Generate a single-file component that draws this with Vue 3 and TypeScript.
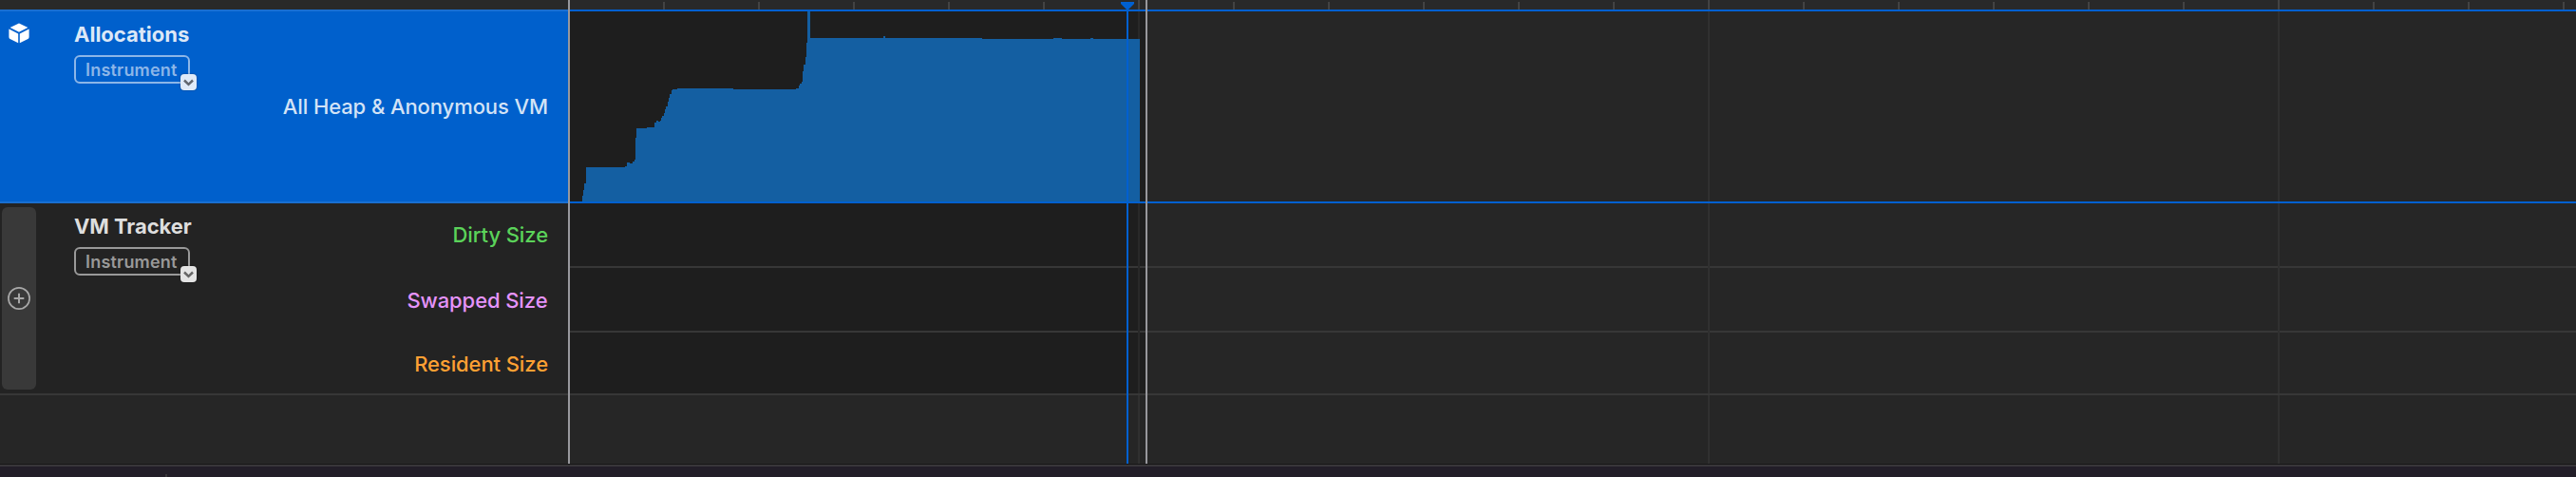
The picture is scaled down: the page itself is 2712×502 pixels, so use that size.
<script setup lang="ts">
interface Lane { name: string; tone: string }
const lanes: Lane[] = [
  { name: 'Dirty Size', tone: 'green' },
  { name: 'Swapped Size', tone: 'purple' },
  { name: 'Resident Size', tone: 'orange' },
]
const ticks: number[] = Array.from({ length: 21 }, (_, i) => 98 + i * 100).filter(x => (x + 2) % 600 !== 0)
const majors: number[] = [598, 1198, 1798]
// Step samples: [x, top] in lane pixels, each held until the next sample.
const steps: [number, number][] = [
  [13, 194], [14, 188], [15, 181], [17, 164], [58, 163], [60, 159], [63, 160], [66, 158], [68, 156],
  [69, 133], [70, 123], [81, 122], [89, 117], [91, 115], [93, 116], [95, 115], [96, 112], [97, 110],
  [99, 107], [100, 103], [101, 100], [103, 95], [104, 91], [105, 87], [107, 83], [108, 82], [113, 81],
  [172, 82], [238, 81], [241, 78], [242, 76], [244, 74], [245, 63], [246, 56], [248, 48], [249, 33],
  [250, 0], [253, 28], [330, 26], [332, 28], [434, 29], [509, 28], [518, 29], [548, 28], [551, 29],
]
const area: string = 'M13 200' + steps.map(([x, y]) => `H${x}V${y}`).join('') + 'H600V200Z'
</script>

<template>
  <div class="app">
    <div class="tracks">
      <aside class="sidebar">
        <div class="cap"></div>
        <section class="track selected">
          <div class="gutter">
            <svg class="cube" width="22" height="22" viewBox="0 0 22 22">
              <path d="M11 0.4 20.4 5 11 9.7 1.6 5Z M0.4 6.5 10.2 11.4V21.3L1.6 17Q.4 16.4.4 15Z M21.6 6.5 11.8 11.4V21.3L20.4 17Q21.6 16.4 21.6 15Z" fill="#fff" />
            </svg>
          </div>
          <div class="info">
            <h2>Allocations</h2>
            <div class="badge"><span>Instrument</span>
              <i class="drop"><svg width="17" height="17" viewBox="0 0 17 17"><path d="M4 6.5 8.5 10.8 13 6.5" fill="none" stroke="#62676f" stroke-width="2.5" /></svg></i>
            </div>
          </div>
          <div class="labels"><span class="heap">All Heap &amp; Anonymous VM</span></div>
        </section>
        <section class="track tracker">
          <div class="gutter">
            <div class="add">
              <svg width="24" height="24" viewBox="0 0 24 24"><g fill="none" stroke="#a8a8a8" stroke-width="1.7"><circle cx="12" cy="12" r="11.1" /><path d="M12 6.7V17.3M6.7 12H17.3" stroke-width="2" /></g></svg>
            </div>
          </div>
          <div class="info">
            <h2>VM Tracker</h2>
            <div class="badge"><span>Instrument</span>
              <i class="drop"><svg width="17" height="17" viewBox="0 0 17 17"><path d="M4 6.5 8.5 10.8 13 6.5" fill="none" stroke="#666" stroke-width="2.5" /></svg></i>
            </div>
          </div>
          <div class="labels"><span v-for="l in lanes" :key="l.name" :class="l.tone">{{ l.name }}</span></div>
        </section>
      </aside>
      <main class="timeline">
        <div class="ruler"></div>
        <div class="heap-row">
          <div class="recorded">
            <svg class="chart" width="606" height="200" viewBox="0 0 606 200" shape-rendering="crispEdges">
              <path d="M598 0h2v200h-2z" fill="#292929" />
              <path :d="area" fill="#145fa2" />
            </svg>
          </div>
        </div>
        <div v-for="l in lanes" :key="l.name" class="lane"><div class="recorded"></div></div>
        <svg class="overlay" width="2112" height="488" viewBox="0 0 2112 488" shape-rendering="crispEdges">
          <rect v-for="t in ticks" :key="t" :x="t" y="2" width="2" height="8" fill="#434343" />
          <g v-for="m in majors" :key="m">
            <rect :x="m" y="0" width="2" height="10" fill="#434343" />
            <rect v-if="m > 600" :x="m" y="12" width="2" height="200" fill="#303030" />
            <rect :x="m" y="214" width="2" height="200" :fill="m > 600 ? '#303030' : '#292929'" />
            <rect :x="m" y="416" width="2" height="72" fill="#303030" />
          </g>
          <rect x="586" y="8" width="2" height="480" fill="#0060d0" />
          <path d="M580 2H594V4L588 10H586L580 4Z" fill="#0060d0" shape-rendering="auto" />
          <rect x="606" y="0" width="2" height="488" fill="#98989d" />
        </svg>
      </main>
    </div>
    <footer class="bottom"><div class="divider"></div></footer>
  </div>
</template>

<style>
body { margin: 0; background: #262626; }
</style>

<style scoped>
.app { width: 2712px; height: 502px; overflow: hidden; background: #262626; font-family: Inter, "Liberation Sans", sans-serif; }
.tracks { display: flex; height: 488px; }
.sidebar { width: 598px; border-right: 2px solid #98989d; flex: none; }
.cap { height: 10px; background: #292929; }
.track { display: flex; box-sizing: border-box; }
.selected { height: 204px; background: #0060cc; border-top: 2px solid #196fd1; border-bottom: 2px solid #196fd1; }
.tracker { height: 202px; background: #232323; border-bottom: 2px solid #373737; }
.gutter { width: 78px; flex: none; }
.cube { display: block; margin: 12px 0 0 8.5px; }
.add { width: 36px; height: 192px; margin: 4px 0 0 2px; border-radius: 6px; background: #393939; display: flex; align-items: center; justify-content: center; }
.info { flex: none; }
h2 { margin: 10px 0 8px; font-size: 22px; line-height: 28px; height: 28px; font-weight: 700; color: #dce8f7; letter-spacing: 0; white-space: nowrap; }
.tracker h2 { color: #dedede; margin: 10px 0 8px; letter-spacing: -0.05px; }
.badge { position: relative; box-sizing: border-box; width: 122px; height: 30px; border: 2px solid #8cb6e8; border-radius: 6px; color: #8cb6e8; padding-left: 10px; }
.tracker .badge { border-color: #999; color: #999; }
.badge span { display: block; font-size: 18px; line-height: 27px; font-weight: 600; letter-spacing: 0.2px; }
.drop { position: absolute; left: 109.5px; top: 17.5px; width: 17px; height: 17px; border-radius: 4px; background: #dfeaf8; box-shadow: 0 0 2px #0006; display: flex; }
.tracker .drop { background: #e4e4e4; }
.labels { flex: 1; display: flex; flex-direction: column; align-items: flex-end; padding-right: 21px; font-size: 22px; font-weight: 450; letter-spacing: -0.09px; white-space: nowrap; }
.labels span { height: 67px; line-height: 67px; }
.labels .green { height: 69px; }
.labels .purple { margin-right: 0.5px; }
.labels .heap { height: 200px; line-height: 200px; color: #d3e3f6; }
.green { color: #5bd35a; }
.purple { color: #e593fb; }
.orange { color: #ffa033; }
.labels .orange { height: 64px; }
.timeline { position: relative; flex: 1; }
.ruler { height: 10px; background: #292929; }
.heap-row { height: 200px; border-top: 2px solid #0060d0; border-bottom: 2px solid #0060d0; }
.recorded { width: 606px; height: 100%; background: #1e1e1e; }
.chart { display: block; }
.lane { height: 66px; border-bottom: 2px solid #373737; }
.lane:nth-child(5) { height: 64px; }
.overlay { position: absolute; left: 0; top: 0; }
.bottom { height: 11px; border-top: 2px solid #38363a; background: #221e28; box-shadow: 0 -1px #171717; margin-top: 1px; }
.divider { width: 2px; height: 3px; margin-left: 174px; background: #38363a; transform: translateY(8px); }
</style>
